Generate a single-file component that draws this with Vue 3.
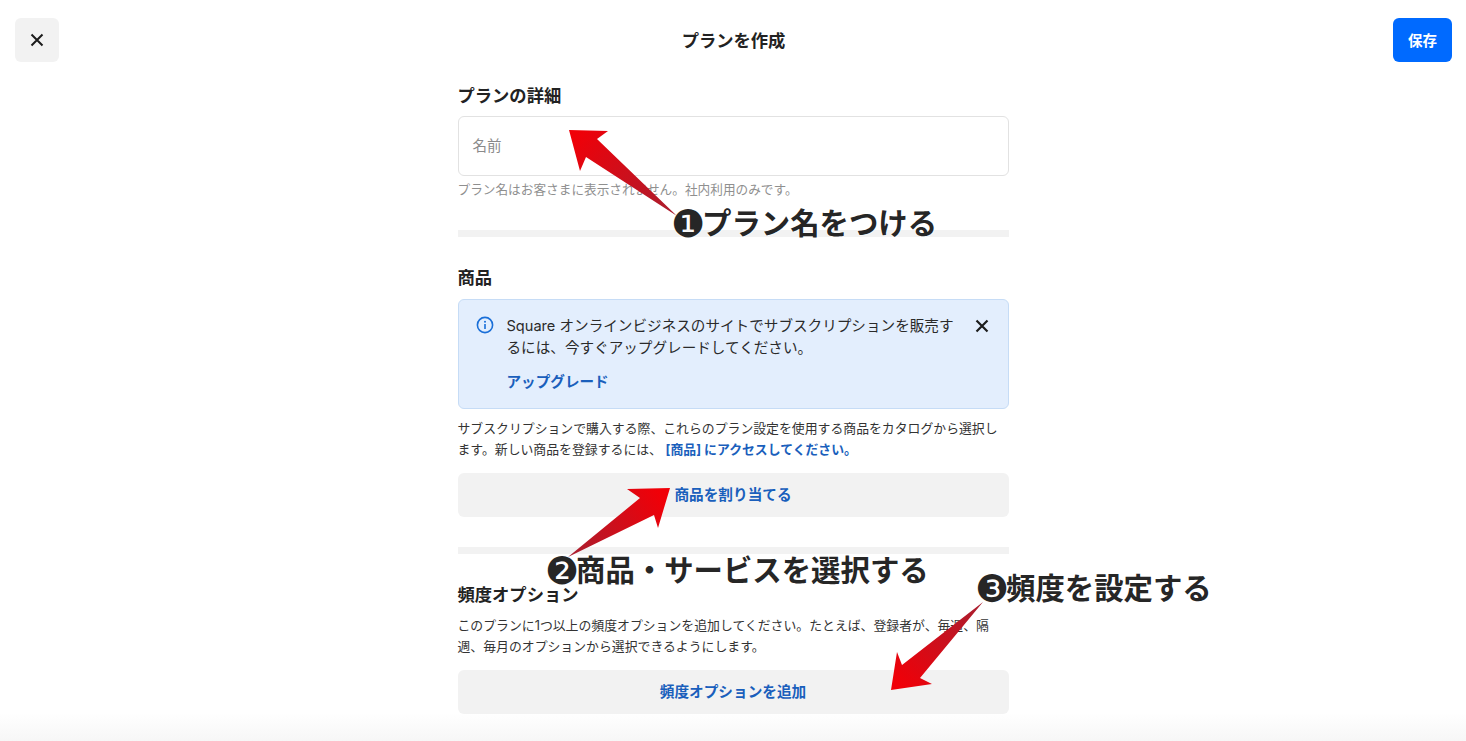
<script setup>
const arrows = [
  { id: 'a1', x1: 677, y1: 216, x2: 575, y2: 135, points: '569,130 608,131 597,139 677,216 586,157 580,171' },
  { id: 'a2', x1: 568, y1: 557, x2: 660, y2: 495, points: '670,488 627,489 640,498 568,557 654,515 658,528' },
  { id: 'a3', x1: 983, y1: 602, x2: 900, y2: 685, points: '891,690 897,652 902,665 983,602 920,678 932,684' }
]
const notes = [
  { cls: 'n1', mark: '❶', text: 'プラン名をつける' },
  { cls: 'n2', mark: '❷', text: '商品・サービスを選択する' },
  { cls: 'n3', mark: '❸', text: '頻度を設定する' }
]
</script>

<template>
  <div class="page">
    <header class="top">
      <button class="close-btn" aria-label="閉じる">
        <svg width="14" height="14" viewBox="0 0 14 14"><path d="M1.5 1.5l11 11M12.5 1.5l-11 11" stroke="#1c1c1c" stroke-width="2" fill="none"/></svg>
      </button>
      <h1 class="title">プランを作成</h1>
      <button class="save-btn">保存</button>
    </header>

    <main class="form">
      <section class="details">
        <h2 class="heading">プランの詳細</h2>
        <div class="input">名前</div>
        <p class="help">プラン名はお客さまに表示されません。社内利用のみです。</p>
      </section>
      <div class="sep sep-a"></div>

      <section class="products">
        <h2 class="heading">商品</h2>
        <div class="notice">
          <svg class="info" width="18" height="18" viewBox="0 0 18 18">
            <circle cx="9" cy="9" r="7.6" fill="none" stroke="#1a6fd8" stroke-width="1.6"/>
            <rect x="8.2" y="8" width="1.6" height="5" fill="#1a6fd8"/>
            <circle cx="9" cy="5.7" r="1" fill="#1a6fd8"/>
          </svg>
          <div class="notice-body">
            <p class="notice-text">Square オンラインビジネスのサイトでサブスクリプションを販売するには、今すぐアップグレードしてください。</p>
            <a class="notice-link">アップグレード</a>
          </div>
          <svg class="dismiss" width="14" height="14" viewBox="0 0 14 14"><path d="M1.5 1.5l11 11M12.5 1.5l-11 11" stroke="#1c1c1c" stroke-width="2.2" fill="none"/></svg>
        </div>
        <p class="body">サブスクリプションで購入する際、これらのプラン設定を使用する商品をカタログから選択します。新しい商品を登録するには、 <a class="inline-link">[商品] にアクセスしてください。</a></p>
        <button class="wide-btn btn-a">商品を割り当てる</button>
      </section>
      <div class="sep sep-b"></div>

      <section class="frequency">
        <h2 class="heading">頻度オプション</h2>
        <p class="body body-c">このプランに1つ以上の頻度オプションを追加してください。たとえば、登録者が、毎週、隔週、毎月のオプションから選択できるようにします。</p>
        <button class="wide-btn btn-c">頻度オプションを追加</button>
      </section>
    </main>

    <div class="fade"></div>

    <svg class="arrows" width="1466" height="741" viewBox="0 0 1466 741">
      <defs>
        <linearGradient v-for="a in arrows" :id="a.id" :key="a.id" gradientUnits="userSpaceOnUse" :x1="a.x1" :y1="a.y1" :x2="a.x2" :y2="a.y2">
          <stop offset="0" stop-color="#a81f30"/>
          <stop offset="1" stop-color="#f00008"/>
        </linearGradient>
      </defs>
      <polygon v-for="a in arrows" :key="a.id" :points="a.points" :fill="`url(#${a.id})`"/>
    </svg>

    <div v-for="n in notes" :key="n.cls" class="note" :class="n.cls"><span class="mark">{{ n.mark }}</span>{{ n.text }}</div>
  </div>
</template>

<style scoped>
.page {
  position: relative;
  width: 1466px;
  height: 741px;
  overflow: hidden;
  background: #fff;
  color: #1f1f1f;
  font-family: "Inter", "Noto Sans CJK JP", sans-serif;
}
.top {
  display: grid;
  grid-template-columns: 1fr auto 1fr;
  align-items: center;
  padding: 18px 14px 0 15px;
}
.close-btn {
  display: flex;
  align-items: center;
  justify-content: center;
  width: 44px;
  height: 44px;
  padding: 0;
  border: 0;
  border-radius: 6px;
  background: #f2f2f2;
}
.title {
  margin: 0;
  padding-top: 1px;
  font-size: 17.3px;
  font-weight: 700;
  line-height: 43px;
  color: #222;
}
.save-btn {
  justify-self: end;
  width: 59px;
  height: 44px;
  padding: 0 0 2px;
  border: 0;
  border-radius: 6px;
  background: #006aff;
  color: #fff;
  font: 700 14.5px "Noto Sans CJK JP", sans-serif;
}
.form {
  width: 551px;
  margin: 0 auto;
}
.heading {
  margin: 0;
  font-size: 17.3px;
  font-weight: 700;
  line-height: 26px;
  color: #222;
}
.details {
  padding-top: 21px;
}
.input {
  box-sizing: border-box;
  height: 60px;
  margin-top: 7px;
  padding: 0 14px;
  border: 1.5px solid #e2e2e2;
  border-radius: 6px;
  font-size: 14.5px;
  line-height: 57px;
  color: #8a8a8a;
}
.help {
  margin: 5px 0 0;
  font-size: 12.67px;
  line-height: 18px;
  color: #8f8f8f;
}
.sep {
  height: 7px;
  background: #f2f2f2;
}
.sep-a {
  margin-top: 31px;
}
.products {
  padding-top: 28px;
}
.notice {
  box-sizing: border-box;
  display: flex;
  height: 110px;
  margin-top: 8px;
  padding: 15px 18px 0 17px;
  border: 1.5px solid #c6dcf6;
  border-radius: 6px;
  background: #e3eefd;
}
.info {
  flex: none;
  margin: 1px 0 0 0;
}
.notice-body {
  width: 449px;
  margin-left: 13px;
}
.notice-text {
  margin: 0;
  font-size: 14.6px;
  line-height: 22px;
  color: #2a2a2a;
}
.notice-link {
  display: block;
  margin-top: 11px;
  font-size: 14.6px;
  font-weight: 700;
  line-height: 24px;
  color: #1a5fbc;
}
.dismiss {
  flex: none;
  margin: 4px 0 0 19px;
}
.body {
  margin: 9px 0 0;
  font-size: 12.86px;
  line-height: 21px;
  color: #333;
}
.inline-link {
  font-weight: 700;
  color: #1a5fbc;
}
.wide-btn {
  display: block;
  width: 100%;
  height: 44px;
  padding: 0 0 3px;
  border: 0;
  border-radius: 6px;
  background: #f2f2f2;
  color: #1a5fbc;
  font: 700 14.65px "Noto Sans CJK JP", sans-serif;
}
.btn-a {
  margin-top: 13px;
}
.sep-b {
  margin-top: 30px;
}
.frequency {
  padding-top: 28px;
}
.body-c {
  margin-top: 7px;
}
.btn-c {
  margin-top: 13px;
}
.fade {
  position: absolute;
  left: 0;
  right: 0;
  bottom: 0;
  height: 28px;
  background: linear-gradient(to bottom, rgba(240, 240, 240, 0), rgba(240, 240, 240, 0.55));
  pointer-events: none;
}
.arrows {
  position: absolute;
  left: 0;
  top: 0;
  pointer-events: none;
}
.note {
  position: absolute;
  font-family: "Noto Sans CJK JP", sans-serif;
  font-size: 29.4px;
  font-weight: 700;
  line-height: 40px;
  white-space: nowrap;
  color: #262626;
  text-shadow: 0 0 2px #fff, 0 0 2px #fff;
}
.mark {
  display: inline-block;
  width: 29px;
  font-family: "DejaVu Sans", sans-serif;
  font-size: 38px;
  font-weight: 400;
  line-height: 0;
  text-align: center;
  transform: translate(-2px, 3px);
}
.n1 {
  left: 673px;
  top: 201px;
}
.n2 {
  left: 547px;
  top: 548px;
}
.n3 {
  left: 977px;
  top: 566px;
}
</style>

<style>
html, body {
  margin: 0;
  background: #fff;
}
</style>
